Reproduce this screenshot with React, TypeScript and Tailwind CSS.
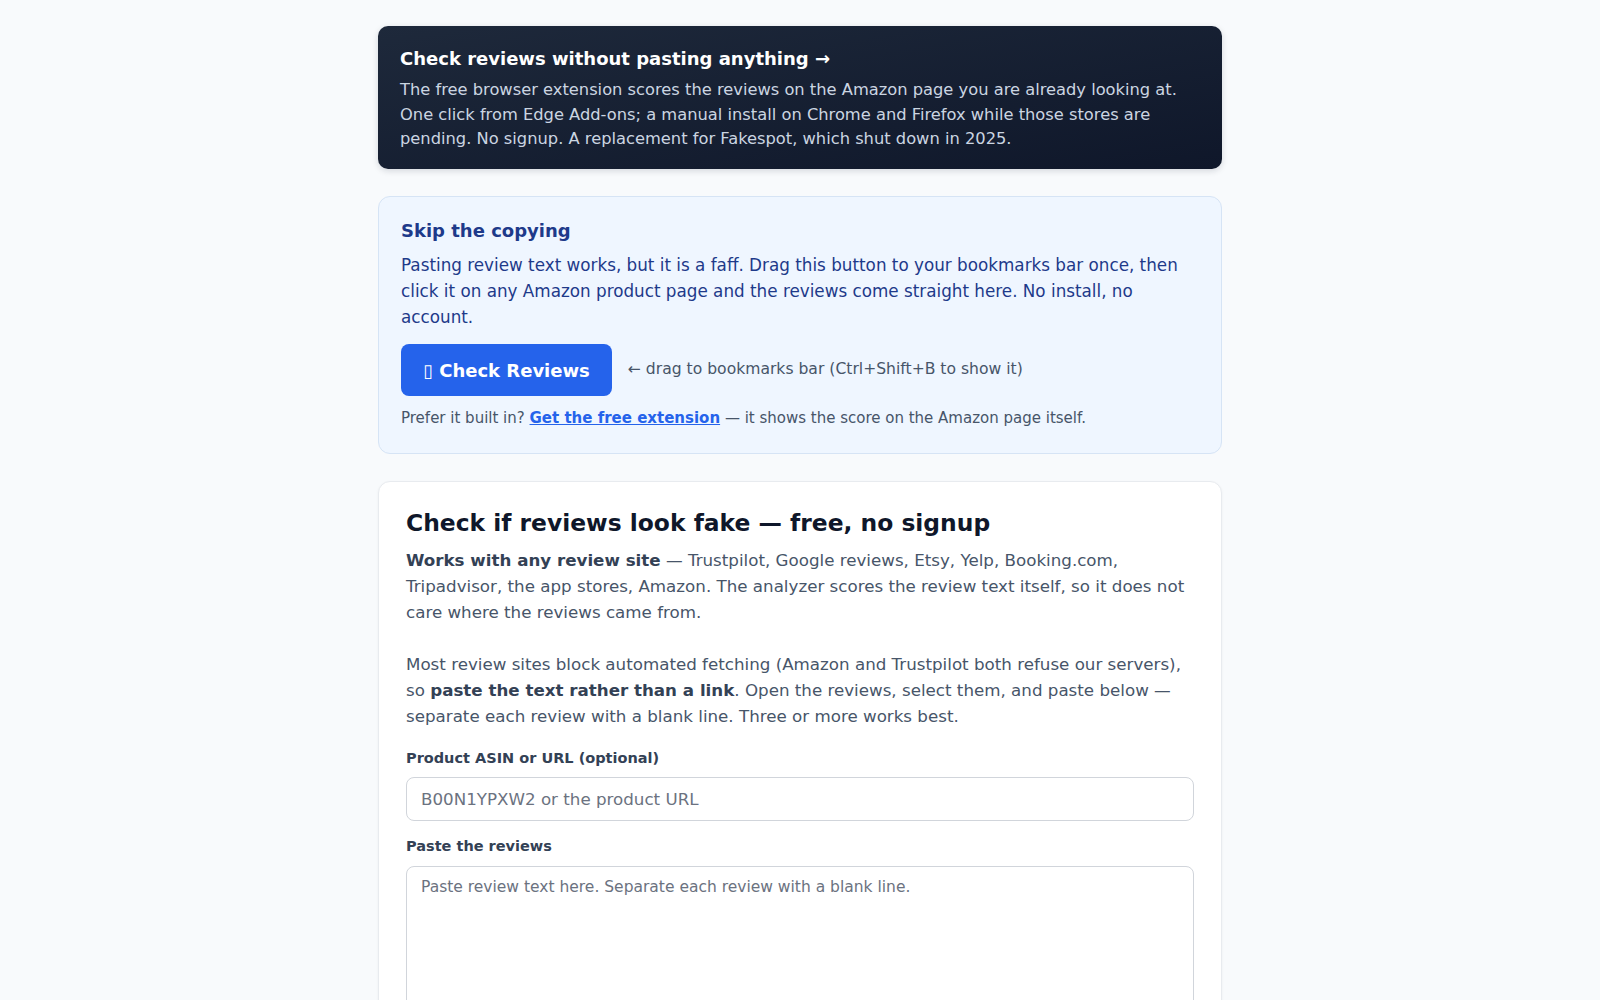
import React from "react";

export default function App() {
  return (
    <div className="min-h-screen bg-[#f8fafc] font-['DejaVu_Sans',sans-serif]">
      <div className="w-[844px] mx-auto pt-[26px] pb-10">
        {/* extension promo */}
        <a
          href="#"
          className="block rounded-[10px] bg-gradient-to-br from-[#1e293b] to-[#0f172a] px-[22px] pt-[19px] pb-[17px] shadow-[0_2px_6px_rgba(15,23,42,0.15)]"
        >
          <div className="text-[18px] leading-[27px] font-bold text-white">
            Check reviews without pasting anything →
          </div>
          <p className="mt-[6px] text-[16.3px] leading-[24.5px] text-[#cbd5e1]">
            The free browser extension scores the reviews on the Amazon page you are already
            looking at. One click from Edge Add-ons; a manual install on Chrome and Firefox while
            those stores are pending. No signup. A replacement for Fakespot, which shut down in
            2025.
          </p>
        </a>

        {/* bookmarklet */}
        <div className="mt-[27px] rounded-[12px] border border-[#d6e4f5] bg-[#eff6ff] px-[22px] pt-[20px] pb-[24px]">
          <h3 className="text-[18px] leading-[27px] font-bold text-[#1e3a8a]">Skip the copying</h3>
          <p className="mt-[8px] text-[16.8px] leading-[26.2px] text-[#1e3a8a]">
            Pasting review text works, but it is a faff. Drag this button to your bookmarks bar
            once, then click it on any Amazon product page and the reviews come straight here. No
            install, no account.
          </p>
          <div className="mt-[14px] flex items-center">
            <a
              href="#"
              className="inline-flex items-center rounded-[8px] bg-[#2563eb] px-[22px] h-[52px] text-[18px] font-bold text-white"
            >
              <span className="font-normal">▯</span>&nbsp;Check Reviews
            </a>
            <span className="ml-[16px] text-[15.6px] text-[#475569]">
              ← drag to bookmarks bar (Ctrl+Shift+B to show it)
            </span>
          </div>
          <p className="mt-[11px] text-[15px] leading-[22px] text-[#475569]">
            Prefer it built in?{" "}
            <a href="#" className="font-bold text-[#2563eb] underline">
              Get the free extension
            </a>{" "}
            — it shows the score on the Amazon page itself.
          </p>
        </div>

        {/* analyzer */}
        <div className="mt-[27px] rounded-[12px] border border-[#e8ebef] bg-white px-[27px] pt-[26px] pb-10 shadow-[0_1px_3px_rgba(15,23,42,0.05)]">
          <h1 className="text-[23.4px] leading-[30px] font-bold text-[#0f172a]">
            Check if reviews look fake — free, no signup
          </h1>
          <p className="mt-[9px] text-[16.7px] leading-[26px] text-[#475569]">
            <strong className="text-[#334155]">Works with any review site</strong> — Trustpilot,
            Google reviews, Etsy, Yelp, Booking.com, Tripadvisor, the app stores, Amazon. The
            analyzer scores the review text itself, so it does not care where the reviews came
            from.
            <br />
            <br />
            Most review sites block automated fetching (Amazon and Trustpilot both refuse our
            servers), so <strong className="text-[#334155]">paste the text rather than a link</strong>.
            Open the reviews, select them, and paste below — separate each review with a blank
            line. Three or more works best.
          </p>

          <label className="mt-[19px] block text-[14.5px] leading-[20px] font-bold text-[#334155]">
            Product ASIN or URL (optional)
          </label>
          <input
            type="text"
            placeholder="B00N1YPXW2 or the product URL"
            className="mt-[9px] block w-full h-[44px] rounded-[8px] border border-[#d1d5db] px-[14px] text-[16.7px] text-[#0f172a] placeholder:text-[#6b7280] outline-none"
          />

          <label className="mt-[15px] block text-[14.5px] leading-[20px] font-bold text-[#334155]">
            Paste the reviews
          </label>
          <textarea
            placeholder="Paste review text here. Separate each review with a blank line."
            className="mt-[10px] block w-full h-[200px] resize-y rounded-[8px] border border-[#d1d5db] px-[14px] py-[8px] text-[15.5px] leading-[24px] text-[#0f172a] placeholder:text-[#6b7280] outline-none"
          />
        </div>
      </div>
    </div>
  );
}
